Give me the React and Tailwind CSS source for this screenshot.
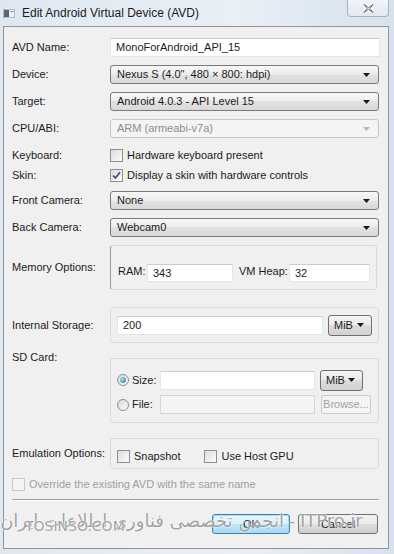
import React from "react";

const F = { fontFamily: '"Liberation Sans", Arial, sans-serif' };

function Arrow({ color = "#1a1a1a" }) {
  return (
    <svg width="7" height="4" viewBox="0 0 7 4" className="shrink-0">
      <path d="M0 0H7L3.5 4Z" fill={color} />
    </svg>
  );
}

function Select({ text, disabled }) {
  return (
    <div
      className={
        "flex h-[19px] w-[270px] items-center justify-between rounded-[3px] border pl-[6px] pr-[8px] " +
        (disabled
          ? "border-[#c2c6ca] bg-[#f4f4f4] text-[#8d8d8d]"
          : "border-[#7a7a7a] bg-[linear-gradient(#f7f7f7,#ececec_50%,#e2e2e2_50%,#d9d9d9)] text-[#1b1b1b]")
      }
    >
      <span className="leading-none">{text}</span>
      <Arrow color={disabled ? "#b8b8b8" : "#1a1a1a"} />
    </div>
  );
}

function Input({ w, value, disabled, h = "h-[19px]" }) {
  return (
    <div
      className={
        "flex shrink-0 items-center px-[5px] " +
        h +
        " " +
        (disabled
          ? "border border-[#d6d6d6] bg-[#f4f4f4]"
          : "border border-[#e3e6e9] border-t-[#c9ccd1] bg-white")
      }
      style={{ width: w }}
    >
      <span className="leading-none text-[#1b1b1b]">{value}</span>
    </div>
  );
}

function MiB({ w }) {
  return (
    <div
      className="flex h-[21px] items-center justify-between rounded-[3px] border border-[#707070] bg-[linear-gradient(#f4f4f4,#e9e9e9_50%,#dcdcdc_50%,#d2d2d2)] pl-[5px] pr-[7px] text-[#1b1b1b]"
      style={{ width: w }}
    >
      <span className="leading-none">MiB</span>
      <Arrow />
    </div>
  );
}

function Check({ checked, disabled }) {
  return (
    <div
      className={
        "relative flex h-[13px] w-[13px] shrink-0 items-center justify-center border " +
        (disabled
          ? "border-[#c8c8c8] bg-[#f4f4f4]"
          : "border-[#8e8f8f] bg-[linear-gradient(135deg,#dcdcdc,#fbfbfb)]")
      }
    >
      {checked && (
        <svg width="9" height="9" viewBox="0 0 9 9">
          <path d="M1 4.5L3.4 7L8 1.2" stroke="#3b4f86" strokeWidth="1.8" fill="none" />
        </svg>
      )}
    </div>
  );
}

function Radio({ on }) {
  return (
    <div className="flex h-[12px] w-[12px] shrink-0 items-center justify-center rounded-full border border-[#8e8f8f] bg-[linear-gradient(135deg,#d8d8d8,#fafafa)]">
      {on && (
        <div className="h-[6px] w-[6px] rounded-full bg-[radial-gradient(circle_at_35%_35%,#9fe0f5,#1f6f9a)]" />
      )}
    </div>
  );
}

function Label({ children, className = "" }) {
  return (
    <div className={"w-[98px] shrink-0 whitespace-nowrap leading-none text-[#1b1b1b] " + className}>
      {children}
    </div>
  );
}

function Row({ label, children, className = "" }) {
  return (
    <div className={"flex items-center " + className}>
      <Label>{label}</Label>
      {children}
    </div>
  );
}

function Group({ children, className = "" }) {
  return (
    <div className={"rounded-[3px] border border-[#d5dbe0] " + className}>{children}</div>
  );
}

const wm = { fontFamily: '"DejaVu Sans", sans-serif', textShadow: "0 0 2px #fff, 0 0 1px #fff" };

export default function App() {
  return (
    <div
      className="relative flex h-[554px] w-[394px] flex-col overflow-hidden bg-[linear-gradient(90deg,#dfe8f1,#e9eff5_60%,#d7e2ed)] text-[11px]"
      style={F}
    >
      {/* title bar */}
      <div className="relative flex h-[26px] shrink-0 items-center pl-[3px]">
        <svg width="12" height="9" viewBox="0 0 12 9" className="mr-[7px] mt-[1px]">
          <rect x="0" y="0" width="12" height="9" fill="#eef0f2" stroke="#8a8f96" strokeWidth="1" />
          <rect x="1" y="1" width="5" height="7" fill="#5d6570" />
          <rect x="7" y="2" width="4" height="1" fill="#9aa1a8" />
        </svg>
        <span className="text-[12px] leading-none text-[#1b1b1b]">Edit Android Virtual Device (AVD)</span>
        <div className="absolute right-[5px] top-0 flex h-[17px] w-[42px] items-center justify-center rounded-b-[4px] border border-t-0 border-[#a9b3be] bg-[linear-gradient(#f1f5f9,#e1e8ef)]">
          <svg width="11" height="9" viewBox="0 0 11 9">
            <path d="M1 0.5L5.5 3.5L10 0.5M1 8.5L5.5 5.5L10 8.5M1 0.5L4 4.5L1 8.5M10 0.5L7 4.5L10 8.5" stroke="#6b737c" strokeWidth="1" fill="#fff" />
          </svg>
        </div>
      </div>

      {/* client */}
      <div className="ml-[3px] mr-[5px] flex h-[523px] shrink-0 flex-col border border-[#8f959b] bg-[#f0f0f0] pl-[8px] pr-[9px]">
        <Row label="AVD Name:" className="mt-[11px] h-[19px]">
          <Input w="270px" value="MonoForAndroid_API_15" />
        </Row>
        <Row label="Device:" className="mt-[8px] h-[19px]">
          <Select text={"Nexus S (4.0\", 480 \u00d7 800: hdpi)"} />
        </Row>
        <Row label="Target:" className="mt-[8px] h-[19px]">
          <Select text="Android 4.0.3 - API Level 15" />
        </Row>
        <Row label="CPU/ABI:" className="mt-[8px] h-[19px]">
          <Select text="ARM (armeabi-v7a)" disabled />
        </Row>
        <Row label="Keyboard:" className="mt-[9px] h-[16px]">
          <Check />
          <span className="ml-[4px] leading-none text-[#1b1b1b]">Hardware keyboard present</span>
        </Row>
        <Row label="Skin:" className="mt-[4px] h-[16px]">
          <Check checked />
          <span className="ml-[4px] leading-none text-[#1b1b1b]">Display a skin with hardware controls</span>
        </Row>
        <Row label="Front Camera:" className="mt-[8px] h-[19px]">
          <Select text="None" />
        </Row>
        <Row label="Back Camera:" className="mt-[8px] h-[19px]">
          <Select text="Webcam0" />
        </Row>

        {/* memory */}
        <Row label="Memory Options:" className="mt-[8px] h-[45px]">
          <Group className="flex h-[45px] w-[267px] items-end border-l-[#9a9ea3] pb-[7px] pl-[7px]">
            <span className="mb-[5px] w-[29px] shrink-0 whitespace-nowrap leading-none text-[#1b1b1b]">RAM:</span>
            <Input w="86px" value="343" h="h-[18px]" />
            <span className="mb-[5px] ml-[6px] w-[50px] shrink-0 whitespace-nowrap leading-none text-[#1b1b1b]">VM Heap:</span>
            <Input w="81px" value="32" h="h-[18px]" />
          </Group>
        </Row>

        {/* internal storage */}
        <Row label="Internal Storage:" className="mt-[17px] h-[36px]">
          <Group className="flex h-[36px] w-[269px] items-center pl-[6px]">
            <Input w="206px" value="200" />
            <div className="ml-[5px]">
              <MiB w="44px" />
            </div>
          </Group>
        </Row>

        {/* sd card */}
        <div className="mt-[15px] flex h-[65px] items-start">
          <Label className="-mt-[6px]">SD Card:</Label>
          <Group className="flex h-[65px] w-[269px] flex-col pl-[6px] pt-[11px]">
            <div className="flex h-[20px] items-center">
              <Radio on />
              <span className="ml-[3px] w-[28px] leading-none text-[#1b1b1b]">Size:</span>
              <Input w="155px" value="" />
              <div className="ml-[5px]">
                <MiB w="43px" />
              </div>
            </div>
            <div className="mt-[5px] flex h-[19px] items-center">
              <Radio />
              <span className="ml-[3px] w-[28px] leading-none text-[#1b1b1b]">File:</span>
              <Input w="155px" value="" disabled />
              <div className="ml-[6px] flex h-[19px] w-[50px] items-center justify-center rounded-[2px] border border-[#c9cbcd] bg-[#f4f4f4] text-[#a2a2a2]">
                <span className="leading-none">Browse...</span>
              </div>
            </div>
          </Group>
        </div>

        {/* emulation */}
        <Row label="Emulation Options:" className="mt-[15px] h-[31px]">
          <Group className="flex h-[31px] w-[269px] items-center pl-[6px] pt-[5px]">
            <Check />
            <span className="ml-[4px] leading-none text-[#1b1b1b]">Snapshot</span>
            <div className="ml-[24px]">
              <Check />
            </div>
            <span className="ml-[4px] leading-none text-[#1b1b1b]">Use Host GPU</span>
          </Group>
        </Row>

        <div className="mt-[7px] flex h-[16px] items-center">
          <Check disabled />
          <span className="ml-[4px] leading-none text-[#a0a0a0]">Override the existing AVD with the same name</span>
        </div>

        <div className="mt-[7px] h-[2px] border-t border-b border-t-[#a0a0a0] border-b-white" />

        <div className="mt-[13px] flex h-[20px] justify-end pr-[1px]">
          <div className="flex h-[20px] w-[78px] items-center justify-center rounded-[3px] border border-[#3c7fb1] bg-[linear-gradient(#eaf6fd,#d9f0fc_50%,#bee6fd_50%,#a7d9f5)] text-[#1b1b1b] shadow-[inset_0_0_0_1px_#a6dcf8]">
            <span className="leading-none">OK</span>
          </div>
          <div className="ml-[8px] flex h-[20px] w-[80px] items-center justify-center rounded-[3px] border border-[#707070] bg-[linear-gradient(#f2f2f2,#ebebeb_50%,#dddddd_50%,#cfcfcf)] text-[#1b1b1b]">
            <span className="leading-none">Cancel</span>
          </div>
        </div>
      </div>

      {/* watermark */}
      <div
        className="pointer-events-none absolute right-[110px] top-[512px] whitespace-nowrap text-[18px] leading-none text-[#8a8a8a]/80"
        style={wm}
        dir="rtl"
      >
        انجمن تخصصی فناوری اطلاعات ایران
      </div>
      <div
        className="pointer-events-none absolute left-[289px] top-[513px] whitespace-nowrap text-[17px] leading-none text-[#8a8a8a]/80"
        style={wm}
      >
        -
      </div>
      <div
        className="pointer-events-none absolute left-[300px] top-[512px] whitespace-nowrap text-[18px] leading-none text-[#8a8a8a]/80"
        style={wm}
      >
        ITPro.ir
      </div>
      <div
        className="pointer-events-none absolute left-[25px] top-[519px] whitespace-nowrap text-[14px] leading-none text-[#8a8a8a]/80"
        style={wm}
      >
        TOSINSO.COM
      </div>
    </div>
  );
}
